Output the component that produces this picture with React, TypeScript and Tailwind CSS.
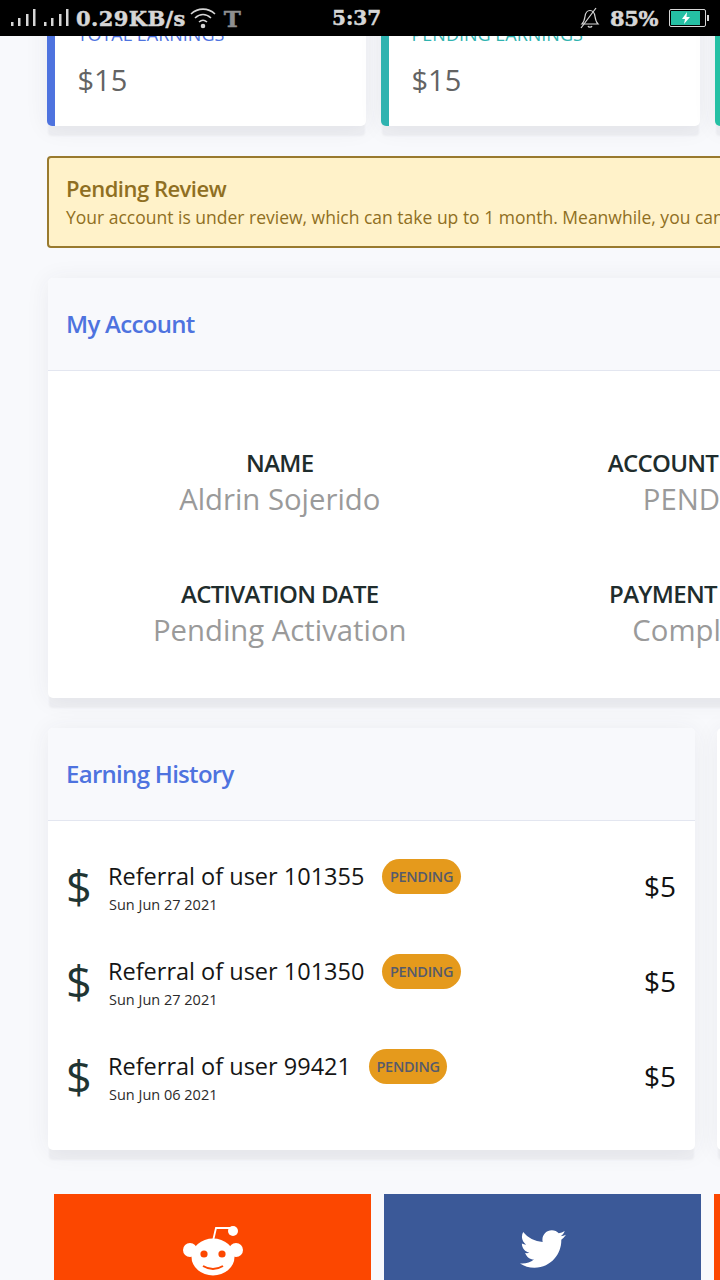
import React from 'react';
import { FaTwitter } from 'react-icons/fa';

const FONT = { fontFamily: '"Open Sans", sans-serif' };
const STATUS_FONT = "font-['DejaVu_Serif',serif] font-bold leading-none [-webkit-text-stroke:0.5px_currentColor]";
const CARD_SHADOW = 'shadow-[0_11px_2px_-1px_rgba(58,59,69,0.05),0_2px_24px_rgba(58,59,69,0.07)]';

const HISTORY = [
  { user: '101355', date: 'Sun Jun 27 2021' },
  { user: '101350', date: 'Sun Jun 27 2021' },
  { user: '99421', date: 'Sun Jun 06 2021' },
];

function SignalBars() {
  return (
    <svg width="25" height="18" viewBox="0 0 25 18" fill="currentColor">
      <rect x="0" y="13" width="2.500" height="4" />
      <rect x="7" y="9" width="2.500" height="8" />
      <rect x="15" y="5" width="2.500" height="12" />
      <rect x="22" y="0" width="2.500" height="17" />
    </svg>
  );
}

function RedditLogo() {
  return (
    <svg width="60" height="54" viewBox="0 0 60 54">
      <path d="M48 3H33l-3 13" fill="none" stroke="#fff" strokeWidth="1.800" />
      <circle cx="50" cy="6" r="5" fill="#fff" />
      <circle cx="7" cy="25" r="7" fill="#fff" />
      <circle cx="53" cy="25" r="7" fill="#fff" />
      <ellipse cx="30" cy="32" rx="21.500" ry="18.500" fill="#fff" />
      <circle cx="21" cy="29" r="3.600" fill="#fc4700" />
      <circle cx="39" cy="29" r="3.600" fill="#fc4700" />
      <path d="M20 41q10 6 20 0" fill="none" stroke="#fc4700" strokeWidth="2" />
    </svg>
  );
}

function StatusBar() {
  return (
    <div className="relative z-10 flex h-9 shrink-0 items-center bg-black pl-[11px] pr-[11px] text-[#d6d6d6]">
      <div className="flex items-center gap-2">
        <SignalBars />
        <SignalBars />
      </div>
      <span className={`ml-[7px] text-[21px] tracking-[0.4px] ${STATUS_FONT}`}>0.29KB/s</span>
      <svg width="26" height="22" viewBox="0 0 26 22" fill="none" stroke="currentColor" strokeWidth="1.6" className="ml-1">
        <path d="M1 7c7-6.500 17-6.500 24 0" />
        <path d="M5 11c5-4.500 11-4.500 16 0" />
        <path d="M9 15c2.500-2.200 5.500-2.200 8 0" />
        <circle cx="13" cy="19" r="1.500" fill="currentColor" />
      </svg>
      <span className={`ml-[8px] text-[23px] text-[#8f8f8f] ${STATUS_FONT}`}>T</span>
      <span className={`ml-[91px] text-[20px] ${STATUS_FONT}`}>5:37</span>
      <svg width="20" height="22" viewBox="0 0 20 22" fill="none" stroke="currentColor" strokeWidth="1.2" className="ml-auto">
        <path d="M2 17c2-2 2.500-4 3-7.500C5.500 6 7.500 3.500 10 3.500s4.500 2.500 5 6c.5 3.500 1 5.500 3 7.500z" />
        <path d="M8 19c.5 1.500 3.500 1.500 4 0" />
        <path d="M1 21 16 1" />
      </svg>
      <span className={`ml-[10px] text-[21px] tracking-[-0.4px] ${STATUS_FONT}`}>85%</span>
      <div className="ml-[11px] flex items-center">
        <div className="flex h-[18px] w-[37px] items-center rounded-[2px] border border-[#d6d6d6] p-px">
          <div className="flex h-full w-[29px] items-center justify-center bg-[#25c0a4]">
            <svg width="10" height="12" viewBox="0 0 10 12" fill="#fff"><path d="M6 0 1 7h3l-1 5 6-7H5.500z" /></svg>
          </div>
        </div>
        <div className="ml-px h-[6px] w-[2px] bg-[#d6d6d6]" />
      </div>
    </div>
  );
}

function StatCard({ label, bar, text }: { label: string; bar: string; text: string }) {
  return (
    <div className={`h-[130px] w-[319px] shrink-0 rounded-[5px] border-l-[8px] bg-white pl-[22.500px] pt-[26px] ${CARD_SHADOW} ${bar}`}>
      <div className={`h-[24px] text-[18px] leading-[24px] ${text}`}>{label}</div>
      <div className="mt-[15px] text-[29px] leading-[38px] text-[#636363]">$15</div>
    </div>
  );
}

function CardHeader({ title }: { title: string }) {
  return (
    <div className="flex h-[93px] items-center border-b border-[#e3e6f0] bg-[#f8f9fc] pl-[18px] text-[24px] font-semibold tracking-[-0.7px] text-[#4e73df]">
      {title}
    </div>
  );
}

function InfoCell({ label, value }: { label: string; value: string }) {
  return (
    <div className="text-center">
      <div className="whitespace-nowrap text-[24px] font-semibold leading-[32px] tracking-[-0.7px] text-[#1f2d2d]">{label}</div>
      <div className="whitespace-nowrap text-[29.3px] leading-[40px] text-[#9a9a9a]">{value}</div>
    </div>
  );
}

export default function App() {
  return (
    <div className="flex h-[1280px] w-[720px] flex-col overflow-hidden bg-[#f8f9fc]" style={FONT}>
      <StatusBar />
      <div className="h-[1244px] overflow-hidden pl-[47px]">
        <div className="-mt-[40px] flex w-[1100px] gap-[15px]">
          <StatCard label="TOTAL EARNINGS" bar="border-[#4e73df]" text="text-[#4e73df]" />
          <StatCard label="PENDING EARNINGS" bar="border-[#2fb3b0]" text="text-[#2fb3b0]" />
          <StatCard label="" bar="border-[#25c0a4]" text="" />
        </div>

        <div className="mt-[30px] h-[92px] w-[1200px] rounded-[4px] border-2 border-[#997a2e] bg-[#fff2c9] pl-[17px] pt-[15px] text-[#8f6f22]">
          <div className="text-[22px] font-semibold leading-[30px] tracking-[-0.5px]">Pending Review</div>
          <div className="mt-[2px] whitespace-nowrap text-[17.5px] leading-[24px]">
            Your account is under review, which can take up to 1 month. Meanwhile, you can share your referral link.
          </div>
        </div>

        <div className={`ml-px mt-[30px] h-[420px] w-[1000px] overflow-hidden rounded-[5px] bg-white ${CARD_SHADOW}`}>
          <CardHeader title="My Account" />
          <div className="grid grid-cols-[427.5px_427.5px] gap-y-[59px] pl-[18px] pt-[76px]">
            <InfoCell label="NAME" value="Aldrin Sojerido" />
            <InfoCell label="ACCOUNT STATUS" value="PENDING" />
            <InfoCell label="ACTIVATION DATE" value="Pending Activation" />
            <InfoCell label="PAYMENT STATUS" value="Completed" />
          </div>
        </div>

        <div className="mt-[30px] flex w-[1300px] gap-[22px] pl-px">
          <div className={`h-[422px] w-[647px] overflow-hidden rounded-[5px] bg-white ${CARD_SHADOW}`}>
            <CardHeader title="Earning History" />
            <div className="flex flex-col gap-[27px] pl-[18px] pr-[19px] pt-[31px]">
              {HISTORY.map((row) => (
                <div key={row.user} className="flex h-[68px] items-center">
                  <span className="w-[43px] shrink-0 text-[45px] leading-none text-[#1f3533]">$</span>
                  <div className="-ml-px">
                    <div className="flex items-center">
                      <span className="text-[23.5px] leading-[34px] text-[#151515]">Referral of user {row.user}</span>
                      <span className="ml-[18px] rounded-full bg-[#e59a1c] px-[7.500px] py-[7px] text-[14.500px] font-semibold leading-[21px] tracking-[-0.3px] text-[#565a6b]">
                        PENDING
                      </span>
                    </div>
                    <div className="ml-px mt-[2px] text-[14.500px] leading-[18px] text-[#2b2b2b]">{row.date}</div>
                  </div>
                  <span className="ml-auto text-[28px] leading-none text-[#111]">$5</span>
                </div>
              ))}
            </div>
          </div>
          <div className={`h-[422px] w-[500px] rounded-[5px] bg-white ${CARD_SHADOW}`} />
        </div>

        <div className="mt-[44px] flex w-[1100px] gap-[13px] pl-[7px]">
          <div className="flex h-[120px] w-[317px] shrink-0 justify-center bg-[#fc4700] pt-[31px]">
            <RedditLogo />
          </div>
          <div className="flex h-[120px] w-[317px] shrink-0 justify-center bg-[#3b5998] pt-[32px] text-white">
            <FaTwitter size={46} />
          </div>
          <div className="h-[120px] w-[317px] shrink-0 bg-[#fc4700]" />
        </div>
      </div>
    </div>
  );
}
